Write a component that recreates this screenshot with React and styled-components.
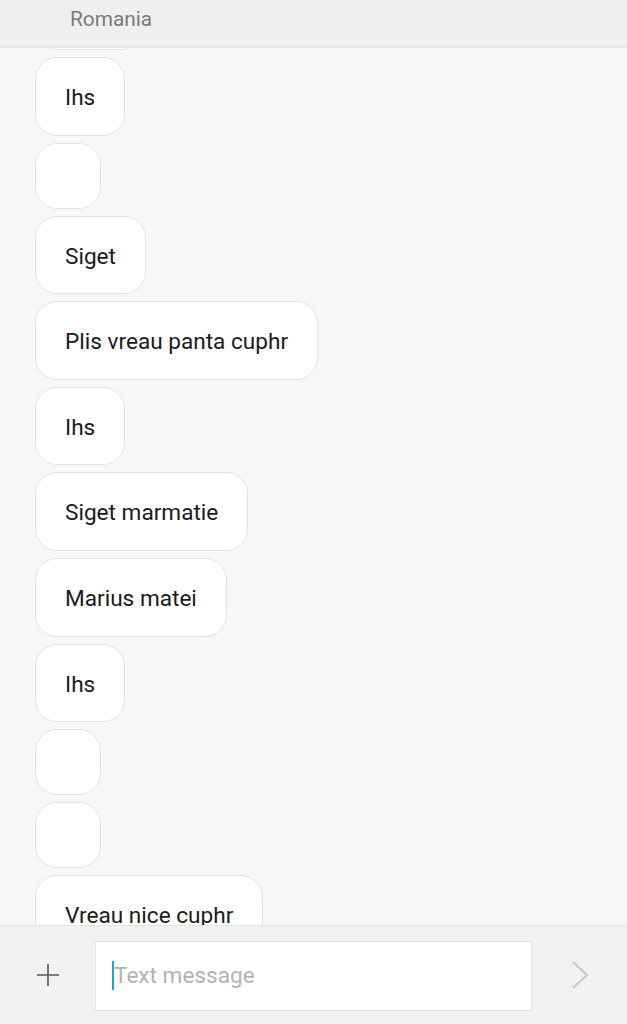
import React from 'react';
import styled, { createGlobalStyle } from 'styled-components';

const Global = createGlobalStyle`
    html, body {
        margin: 0;
        padding: 0;
        background: #f7f7f7;
    }
    body {
        font-family: Roboto, "Noto Sans", sans-serif;
    }
`

const Screen = styled.div`
    display: flex;
    flex-direction: column;
    width: 627px;
    height: 1024px;
    overflow: hidden;
    background: #f7f7f7;
`

const Header = styled.header`
    flex: none;
    box-sizing: border-box;
    height: 48px;
    padding: 5px 0 0 70px;
    background: #eff0ee;
    border-bottom: 2px solid #e3e6e2;
    color: #7a7a7a;
    font-size: 20.8px;
    line-height: 28px;
    position: relative;
    z-index: 1;
`

const Thread = styled.div`
    flex: 1;
    overflow: hidden;
`

const List = styled.div`
    display: flex;
    flex-direction: column;
    align-items: flex-start;
    gap: 7px;
    padding: 0 0 0 35px;
    margin-top: -64px;
`

const Bubble = styled.div`
    box-sizing: border-box;
    min-height: ${p => (p.$empty ? '66px' : '78.6px')};
    min-width: ${p => p.$w || 66}px;
    padding: ${p => (p.$empty ? '0' : '26px 29px 22.6px')};
    background: #fff;
    border: 1px solid #e3e3e3;
    border-radius: 22px;
    color: #1c1c1c;
    font-size: 22.6px;
    line-height: 28px;
`

const Composer = styled.div`
    flex: none;
    height: 98px;
    display: flex;
    align-items: center;
    background: #f2f3f1;
    border-top: 1px solid #e2e4e1;
`

const IconBtn = styled.div`
    flex: none;
    width: ${p => p.$w}px;
    display: flex;
    justify-content: center;
    align-items: center;
`

const Field = styled.div`
    box-sizing: border-box;
    width: 437px;
    height: 70px;
    margin-top: 1px;
    padding: 0 0 0 16px;
    display: flex;
    align-items: center;
    background: #fff;
    border: 1px solid #e4e4e4;
`

const Caret = styled.span`
    width: 2px;
    height: 29px;
    background: #1aa6d4;
`

const Placeholder = styled.span`
    color: #b3b3b3;
    font-size: 22.6px;
`

const messages = [
    { text: '', w: 108 },
    { text: 'Ihs' },
    { text: '' },
    { text: 'Siget' },
    { text: 'Plis vreau panta cuphr' },
    { text: 'Ihs' },
    { text: 'Siget marmatie' },
    { text: 'Marius matei' },
    { text: 'Ihs' },
    { text: '' },
    { text: '' },
    { text: 'Vreau nice cuphr' },
];

const App = () => {
    return (
        <Screen>
            <Global />
            <Header>Romania</Header>
            <Thread>
                <List>
                    {
                        messages.map((m, idx) => (
                            <Bubble key={idx} $empty={m.text === ''} $w={m.w}>{m.text}</Bubble>
                        ))
                    }
                </List>
            </Thread>
            <Composer>
                <IconBtn $w={95}>
                    <svg width="24" height="24" viewBox="0 0 24 24" fill="none" stroke="#555" strokeWidth="1.6">
                        <path d="M12 1v22M1 12h22" />
                    </svg>
                </IconBtn>
                <Field>
                    <Caret />
                    <Placeholder>Text message</Placeholder>
                </Field>
                <IconBtn $w={95}>
                    <svg width="18" height="28" viewBox="0 0 18 28" fill="none" stroke="#c6c6c6" strokeWidth="2">
                        <path d="M2 1l14 13L2 27" />
                    </svg>
                </IconBtn>
            </Composer>
        </Screen>
    )
}

export default App
